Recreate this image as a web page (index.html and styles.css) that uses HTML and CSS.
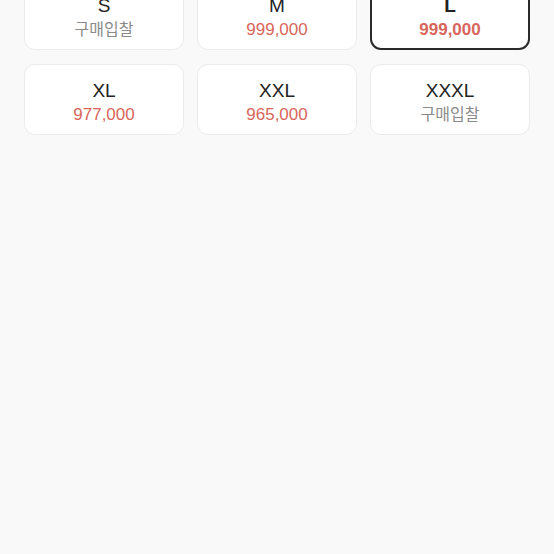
FILE: index.html
```html
<!DOCTYPE html>
<html lang="ko">
<head>
    <meta charset="UTF-8">
    <meta name="viewport" content="width=device-width, initial-scale=1.0">
    <title>사이즈 선택</title>
    <link rel="stylesheet" href="styles.css">
</head>
<body>
    <div class="size-grid">
        <button class="size-option">
            <span class="size-name">S</span>
            <span class="size-price empty">구매입찰</span>
        </button>
        <button class="size-option">
            <span class="size-name">M</span>
            <span class="size-price">999,000</span>
        </button>
        <button class="size-option selected">
            <span class="size-name">L</span>
            <span class="size-price">999,000</span>
        </button>
        <button class="size-option">
            <span class="size-name">XL</span>
            <span class="size-price">977,000</span>
        </button>
        <button class="size-option">
            <span class="size-name">XXL</span>
            <span class="size-price">965,000</span>
        </button>
        <button class="size-option">
            <span class="size-name">XXXL</span>
            <span class="size-price empty">구매입찰</span>
        </button>
    </div>
</body>
</html>
```

FILE: styles.css
```css
body {
    font-family: "Liberation Sans", "Noto Sans CJK KR", sans-serif;
    background-color: #f9f9f9;
    color: #222;
    margin: 0;
    padding: 0;
}

.size-grid {
    display: grid;
    grid-template-columns: repeat(3, 160px);
    column-gap: 13px;
    row-gap: 14px;
    padding: 0 24px;
    margin-top: -21px;
}

.size-option {
    display: flex;
    flex-direction: column;
    align-items: center;
    box-sizing: border-box;
    height: 71px;
    padding: 13px 0 0;
    background-color: #fff;
    border: 1px solid #ebebeb;
    border-radius: 11px;
    font-family: inherit;
    cursor: pointer;
}

.size-option .size-name {
    font-size: 19px;
    line-height: 25px;
    color: #222;
}

.size-option .size-price {
    font-size: 17px;
    line-height: 24px;
    color: #d8665c;
}

.size-option .size-price.empty {
    font-size: 16px;
    color: #8a8a8a;
}

.size-option.selected {
    border: 2px solid #2a2a2a;
    padding-top: 12px;
}

.size-option.selected .size-name {
    font-weight: bold;
}

.size-option.selected .size-price {
    font-weight: 600;
}
```
